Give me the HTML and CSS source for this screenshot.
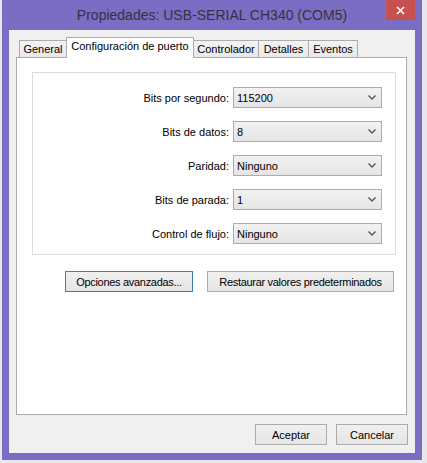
FILE: index.html
```html
<html>

<head>
    <title>Propiedades: USB-SERIAL CH340 (COM5)</title>

    <link rel="stylesheet" href="styles.css">
</head>

<body>

    <div class="window">
        <header class="titlebar">
            <span class="title">Propiedades: USB-SERIAL CH340 (COM5)</span>
            <span class="close">
                <svg width="9" height="9" viewBox="0 0 9 9"><path d="M1 1 L8 8 M8 1 L1 8" stroke="#fff" stroke-width="1.7" fill="none"/></svg>
            </span>
        </header>

        <div class="client">
            <nav class="tabs">
                <span class="tab tab-general">General</span>
                <span class="tab tab-port active">Configuración de puerto</span>
                <span class="tab tab-driver">Controlador</span>
                <span class="tab tab-details">Detalles</span>
                <span class="tab tab-events">Eventos</span>
            </nav>

            <section class="panel">
                <div class="group">
                    <div class="row">
                        <label>Bits por segundo:</label>
                        <div class="combo"><span>115200</span><svg class="chev" width="8" height="5" viewBox="0 0 8 5"><polyline points="0.5,0.5 4,4 7.5,0.5" stroke="#555" stroke-width="1.4" fill="none"/></svg></div>
                    </div>
                    <div class="row">
                        <label>Bits de datos:</label>
                        <div class="combo"><span>8</span><svg class="chev" width="8" height="5" viewBox="0 0 8 5"><polyline points="0.5,0.5 4,4 7.5,0.5" stroke="#555" stroke-width="1.4" fill="none"/></svg></div>
                    </div>
                    <div class="row">
                        <label>Paridad:</label>
                        <div class="combo"><span>Ninguno</span><svg class="chev" width="8" height="5" viewBox="0 0 8 5"><polyline points="0.5,0.5 4,4 7.5,0.5" stroke="#555" stroke-width="1.4" fill="none"/></svg></div>
                    </div>
                    <div class="row">
                        <label>Bits de parada:</label>
                        <div class="combo"><span>1</span><svg class="chev" width="8" height="5" viewBox="0 0 8 5"><polyline points="0.5,0.5 4,4 7.5,0.5" stroke="#555" stroke-width="1.4" fill="none"/></svg></div>
                    </div>
                    <div class="row">
                        <label>Control de flujo:</label>
                        <div class="combo"><span>Ninguno</span><svg class="chev" width="8" height="5" viewBox="0 0 8 5"><polyline points="0.5,0.5 4,4 7.5,0.5" stroke="#555" stroke-width="1.4" fill="none"/></svg></div>
                    </div>
                </div>

                <div class="actions">
                    <button class="btn btn-advanced default">Opciones avanzadas...</button>
                    <button class="btn btn-restore">Restaurar valores predeterminados</button>
                </div>
            </section>

            <footer class="footer">
                <button class="btn btn-dialog">Aceptar</button>
                <button class="btn btn-dialog">Cancelar</button>
            </footer>
        </div>
    </div>

</body>

</html>
```

FILE: styles.css
```css
body {
    margin: 0;
    background-color: #e8e8e8;
    font-family: "Segoe UI", "Liberation Sans", Arial, sans-serif;
    font-size: 11px;
    color: #000;
}

.window {
    position: relative;
    margin-left: 2px;
    width: 420px;
    height: 460px;
    box-sizing: border-box;
    padding: 0 7px 7px 7px;
    background-color: #7b6dc3;
    display: flex;
    flex-direction: column;
}

.titlebar {
    height: 30px;
    display: flex;
    align-items: center;
    justify-content: center;
}

.title {
    font-size: 14px;
    color: #34323f;
    margin-top: -1px;
}

.close {
    position: absolute;
    top: 0;
    right: 7px;
    width: 29px;
    height: 20px;
    background-color: #c75050;
    display: flex;
    align-items: center;
    justify-content: center;
}

.client {
    flex: 1;
    background-color: #f0f0f0;
    padding: 7px 8px 8px 7px;
    display: flex;
    flex-direction: column;
}

.tabs {
    height: 21px;
    margin-bottom: -1px;
    padding-left: 3px;
    display: flex;
    align-items: flex-end;
    position: relative;
    z-index: 1;
}

.tab {
    height: 17px;
    margin-bottom: 1px;
    margin-left: -1px;
    box-sizing: border-box;
    border: 1px solid #acacac;
    border-bottom: none;
    background: linear-gradient(#f3f3f3, #e9e9e9);
    text-align: center;
    line-height: 16px;
}

.tab.active {
    height: 21px;
    margin-bottom: 0;
    background: #fff;
    line-height: 17px;
}

.tab-general { width: 48px; margin-left: 0; }
.tab-port { width: 128px; }
.tab-driver { width: 66px; }
.tab-details { width: 51px; }
.tab-events { width: 50px; }

.panel {
    flex: 1;
    background-color: #fff;
    border: 1px solid #adadad;
    padding: 14px 10px 0 15px;
}

.group {
    height: 183px;
    box-sizing: border-box;
    border: 1px solid #dcdcdc;
    padding: 14px 13px 0 0;
    display: flex;
    flex-direction: column;
    gap: 13px;
}

.row {
    display: flex;
    justify-content: flex-end;
    align-items: center;
    gap: 4px;
}

.combo {
    width: 149px;
    height: 21px;
    box-sizing: border-box;
    border: 1px solid #acacac;
    background: linear-gradient(#f2f2f2, #e5e5e5);
    padding: 0 5px 0 3px;
    display: flex;
    align-items: center;
}

.chev {
    margin-left: auto;
}

.actions {
    margin-top: 16px;
    padding-left: 33px;
    display: flex;
    gap: 14px;
}

.btn {
    height: 21px;
    box-sizing: border-box;
    border: 1px solid #acacac;
    background: linear-gradient(#f0f0f0, #e5e5e5);
    font-family: inherit;
    font-size: 11px;
    letter-spacing: -0.3px;
    color: #000;
    padding: 0;
}

.btn.default {
    border-color: #3c7fb1;
}

.btn-advanced { width: 128px; }
.btn-restore { width: 187px; }

.footer {
    margin-top: 9px;
    margin-right: -1px;
    display: flex;
    justify-content: flex-end;
    gap: 9px;
}

.btn-dialog {
    width: 72px;
    letter-spacing: 0;
}
```
